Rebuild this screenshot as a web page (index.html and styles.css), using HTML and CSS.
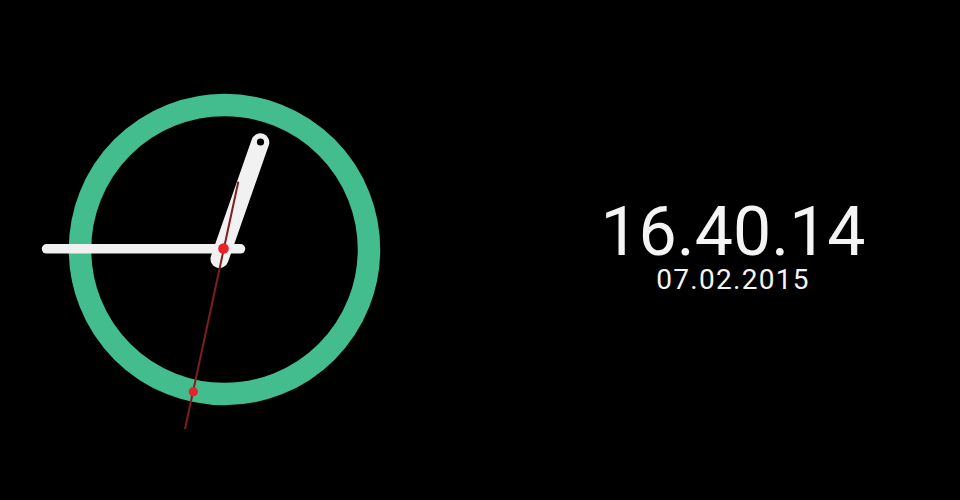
FILE: index.html
```html
<!DOCTYPE html>
<html lang="en">
<head>
<meta charset="utf-8">
<title>Clock</title>
<link rel="stylesheet" href="styles.css">
</head>
<body>
<main class="screen">
  <div class="dial">
    <svg class="dial-svg" width="440" height="500" viewBox="0 0 440 500" xmlns="http://www.w3.org/2000/svg">
      <circle cx="224.5" cy="249.5" r="144.5" fill="none" stroke="#43bd8d" stroke-width="22.5"/>
      <line x1="46.5" y1="248.8" x2="240.5" y2="248.8" stroke="#f1f1f1" stroke-width="9.5" stroke-linecap="round"/>
      <line x1="260.3" y1="142.3" x2="219.5" y2="259" stroke="#f1f1f1" stroke-width="18" stroke-linecap="round"/>
      <circle cx="260.5" cy="142" r="3.6" fill="#000"/>
      <line x1="238.3" y1="181.7" x2="185" y2="429" stroke="#7e1d22" stroke-width="2"/>
      <circle cx="223.5" cy="248.5" r="5.3" fill="#e6222c"/>
      <circle cx="193.3" cy="391.7" r="4.6" fill="#e6222c"/>
    </svg>
  </div>
  <div class="readout">
    <div class="time">16.40.14</div>
    <div class="date">07.02.2015</div>
  </div>
</main>
</body>
</html>
```

FILE: styles.css
```css
html, body {
  margin: 0;
  padding: 0;
  background: #000;
}

.screen {
  width: 960px;
  height: 500px;
  display: flex;
  align-items: center;
  background: #000;
  overflow: hidden;
}

.dial {
  width: 440px;
  height: 500px;
  flex: none;
}

.dial-svg {
  display: block;
}

.readout {
  flex: 1;
  padding-left: 66px;
  padding-bottom: 8px;
  display: flex;
  flex-direction: column;
  align-items: center;
  color: #f4f4f4;
  font-family: Roboto, "Noto Sans", sans-serif;
}

.time {
  font-size: 68px;
  line-height: 68px;
  font-weight: 400;
}

.date {
  font-size: 28px;
  line-height: 28px;
  letter-spacing: 1.3px;
}
```
